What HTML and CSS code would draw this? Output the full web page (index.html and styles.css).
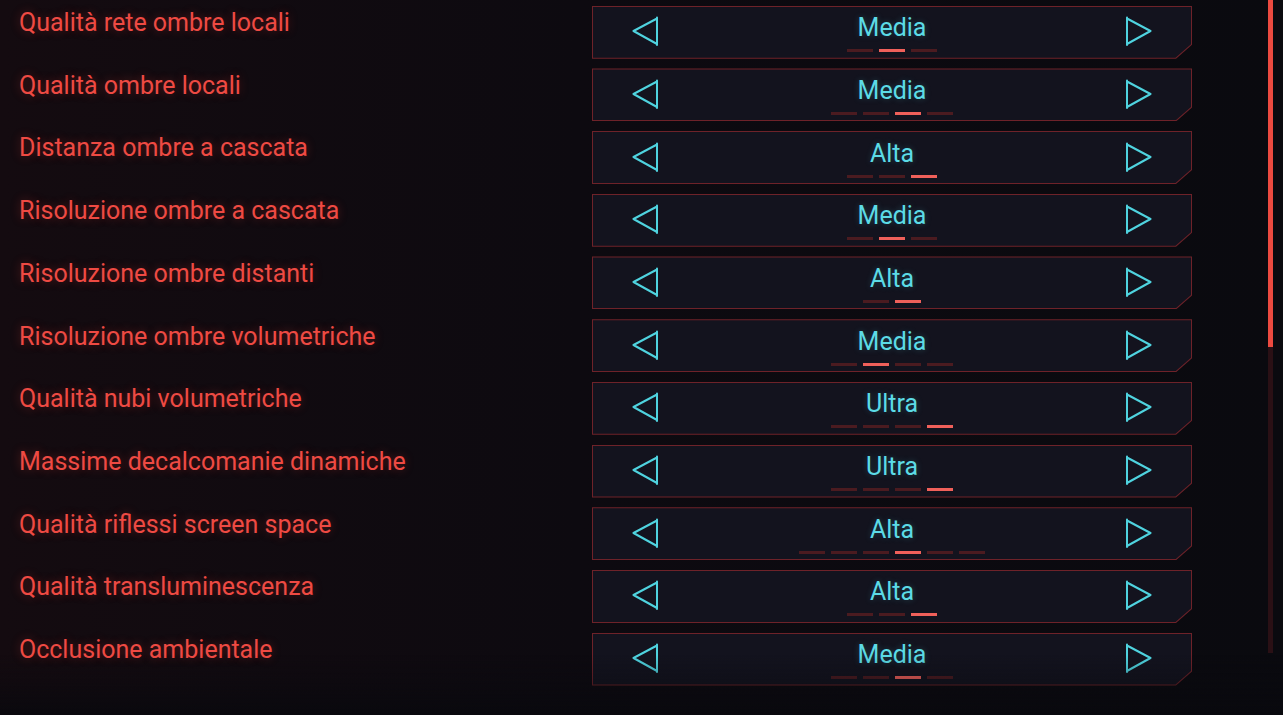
FILE: index.html
```html
<!DOCTYPE html>
<html lang="it">

<head>
    <meta charset="UTF-8">
    <meta name="viewport" content="width=device-width, initial-scale=1.0">
    <title>Impostazioni grafiche</title>
    <link rel="stylesheet" href="styles.css">
</head>

<body>
    <div class="page">
        <div class="list">
            <div class="row">
                <div class="label">Qualità rete ombre locali</div>
                <div class="field">
                    <div class="field-body">
                        <svg class="arrow" viewBox="0 0 26 30"><path d="M25 1.5 L25 29 M25 2.5 L1.5 15 L25 28" /></svg>
                        <div class="value">
                            <span class="value-text">Media</span>
                            <div class="steps"><i></i><i class="on"></i><i></i></div>
                        </div>
                        <svg class="arrow" viewBox="0 0 26 30"><path d="M1 1.5 L1 29 M1 2.5 L24.5 15 L1 28" /></svg>
                    </div>
                </div>
            </div>
            <div class="row">
                <div class="label">Qualità ombre locali</div>
                <div class="field">
                    <div class="field-body">
                        <svg class="arrow" viewBox="0 0 26 30"><path d="M25 1.5 L25 29 M25 2.5 L1.5 15 L25 28" /></svg>
                        <div class="value">
                            <span class="value-text">Media</span>
                            <div class="steps"><i></i><i></i><i class="on"></i><i></i></div>
                        </div>
                        <svg class="arrow" viewBox="0 0 26 30"><path d="M1 1.5 L1 29 M1 2.5 L24.5 15 L1 28" /></svg>
                    </div>
                </div>
            </div>
            <div class="row">
                <div class="label">Distanza ombre a cascata</div>
                <div class="field">
                    <div class="field-body">
                        <svg class="arrow" viewBox="0 0 26 30"><path d="M25 1.5 L25 29 M25 2.5 L1.5 15 L25 28" /></svg>
                        <div class="value">
                            <span class="value-text">Alta</span>
                            <div class="steps"><i></i><i></i><i class="on"></i></div>
                        </div>
                        <svg class="arrow" viewBox="0 0 26 30"><path d="M1 1.5 L1 29 M1 2.5 L24.5 15 L1 28" /></svg>
                    </div>
                </div>
            </div>
            <div class="row">
                <div class="label">Risoluzione ombre a cascata</div>
                <div class="field">
                    <div class="field-body">
                        <svg class="arrow" viewBox="0 0 26 30"><path d="M25 1.5 L25 29 M25 2.5 L1.5 15 L25 28" /></svg>
                        <div class="value">
                            <span class="value-text">Media</span>
                            <div class="steps"><i></i><i class="on"></i><i></i></div>
                        </div>
                        <svg class="arrow" viewBox="0 0 26 30"><path d="M1 1.5 L1 29 M1 2.5 L24.5 15 L1 28" /></svg>
                    </div>
                </div>
            </div>
            <div class="row">
                <div class="label">Risoluzione ombre distanti</div>
                <div class="field">
                    <div class="field-body">
                        <svg class="arrow" viewBox="0 0 26 30"><path d="M25 1.5 L25 29 M25 2.5 L1.5 15 L25 28" /></svg>
                        <div class="value">
                            <span class="value-text">Alta</span>
                            <div class="steps"><i></i><i class="on"></i></div>
                        </div>
                        <svg class="arrow" viewBox="0 0 26 30"><path d="M1 1.5 L1 29 M1 2.5 L24.5 15 L1 28" /></svg>
                    </div>
                </div>
            </div>
            <div class="row">
                <div class="label">Risoluzione ombre volumetriche</div>
                <div class="field">
                    <div class="field-body">
                        <svg class="arrow" viewBox="0 0 26 30"><path d="M25 1.5 L25 29 M25 2.5 L1.5 15 L25 28" /></svg>
                        <div class="value">
                            <span class="value-text">Media</span>
                            <div class="steps"><i></i><i class="on"></i><i></i><i></i></div>
                        </div>
                        <svg class="arrow" viewBox="0 0 26 30"><path d="M1 1.5 L1 29 M1 2.5 L24.5 15 L1 28" /></svg>
                    </div>
                </div>
            </div>
            <div class="row">
                <div class="label">Qualità nubi volumetriche</div>
                <div class="field">
                    <div class="field-body">
                        <svg class="arrow" viewBox="0 0 26 30"><path d="M25 1.5 L25 29 M25 2.5 L1.5 15 L25 28" /></svg>
                        <div class="value">
                            <span class="value-text">Ultra</span>
                            <div class="steps"><i></i><i></i><i></i><i class="on"></i></div>
                        </div>
                        <svg class="arrow" viewBox="0 0 26 30"><path d="M1 1.5 L1 29 M1 2.5 L24.5 15 L1 28" /></svg>
                    </div>
                </div>
            </div>
            <div class="row">
                <div class="label">Massime decalcomanie dinamiche</div>
                <div class="field">
                    <div class="field-body">
                        <svg class="arrow" viewBox="0 0 26 30"><path d="M25 1.5 L25 29 M25 2.5 L1.5 15 L25 28" /></svg>
                        <div class="value">
                            <span class="value-text">Ultra</span>
                            <div class="steps"><i></i><i></i><i></i><i class="on"></i></div>
                        </div>
                        <svg class="arrow" viewBox="0 0 26 30"><path d="M1 1.5 L1 29 M1 2.5 L24.5 15 L1 28" /></svg>
                    </div>
                </div>
            </div>
            <div class="row">
                <div class="label">Qualità riflessi screen space</div>
                <div class="field">
                    <div class="field-body">
                        <svg class="arrow" viewBox="0 0 26 30"><path d="M25 1.5 L25 29 M25 2.5 L1.5 15 L25 28" /></svg>
                        <div class="value">
                            <span class="value-text">Alta</span>
                            <div class="steps"><i></i><i></i><i></i><i class="on"></i><i></i><i></i></div>
                        </div>
                        <svg class="arrow" viewBox="0 0 26 30"><path d="M1 1.5 L1 29 M1 2.5 L24.5 15 L1 28" /></svg>
                    </div>
                </div>
            </div>
            <div class="row">
                <div class="label">Qualità transluminescenza</div>
                <div class="field">
                    <div class="field-body">
                        <svg class="arrow" viewBox="0 0 26 30"><path d="M25 1.5 L25 29 M25 2.5 L1.5 15 L25 28" /></svg>
                        <div class="value">
                            <span class="value-text">Alta</span>
                            <div class="steps"><i></i><i></i><i class="on"></i></div>
                        </div>
                        <svg class="arrow" viewBox="0 0 26 30"><path d="M1 1.5 L1 29 M1 2.5 L24.5 15 L1 28" /></svg>
                    </div>
                </div>
            </div>
            <div class="row">
                <div class="label">Occlusione ambientale</div>
                <div class="field">
                    <div class="field-body">
                        <svg class="arrow" viewBox="0 0 26 30"><path d="M25 1.5 L25 29 M25 2.5 L1.5 15 L25 28" /></svg>
                        <div class="value">
                            <span class="value-text">Media</span>
                            <div class="steps"><i></i><i></i><i class="on"></i><i></i></div>
                        </div>
                        <svg class="arrow" viewBox="0 0 26 30"><path d="M1 1.5 L1 29 M1 2.5 L24.5 15 L1 28" /></svg>
                    </div>
                </div>
            </div>
        </div>
        <div class="scroll">
            <div class="scroll-thumb"></div>
        </div>
    </div>
</body>

</html>
```
FILE: styles.css
```css
* {
    margin: 0;
    padding: 0;
    box-sizing: border-box;
}

html,
body {
    height: 100%;
}

body {
    font-family: Roboto, "Noto Sans", sans-serif;
    background: linear-gradient(90deg, #140b10 0%, #0d0a10 45%, #0a0a0f 100%);
    overflow: hidden;
}

/* dim the last row towards the bottom edge */
body::after {
    content: "";
    position: fixed;
    left: 0;
    right: 0;
    bottom: 0;
    height: 60px;
    background: linear-gradient(180deg, rgba(9, 9, 14, 0) 0%, rgba(9, 9, 14, 0.3) 45%, rgba(9, 9, 14, 0.85) 100%);
    pointer-events: none;
}

.page {
    display: flex;
}

.list {
    width: 1268px;
    padding-top: 5.7px;
    display: grid;
    grid-auto-rows: 53px;
    row-gap: 9.7px;
}

.row {
    display: grid;
    grid-template-columns: 592px 600px;
}

.label {
    padding: 4.4px 0 0 19px;
    font-size: 25px;
    line-height: 25px;
    color: #ee4a43;
    text-shadow: 0 0 10px rgba(230, 60, 50, 0.35);
    white-space: nowrap;
}

.field {
    background: #6e2229;
    clip-path: polygon(0 0, 100% 0, 100% calc(100% - 14px), calc(100% - 16px) 100%, 0 100%);
    padding: 1px;
}

.field-body {
    height: 100%;
    background: #13131e;
    clip-path: polygon(0 0, 100% 0, 100% calc(100% - 13.5px), calc(100% - 15.5px) 100%, 0 100%);
    display: flex;
    justify-content: space-between;
    align-items: flex-start;
    padding: 0 39px;
}

.arrow {
    width: 26px;
    height: 30px;
    margin-top: 9.5px;
    fill: none;
    stroke: #4fd3df;
    stroke-width: 2;
    stroke-linejoin: round;
    stroke-linecap: round;
}

.value {
    display: flex;
    flex-direction: column;
    align-items: center;
    padding-top: 8.5px;
}

.value-text {
    font-size: 25px;
    line-height: 25px;
    color: #5cdbe6;
    text-shadow: 0 0 6px rgba(80, 210, 225, 0.25);
}

.steps {
    display: flex;
    gap: 6px;
    margin-top: 9px;
}

.steps i {
    width: 26px;
    height: 3px;
    background: #4b1b20;
}

.steps i.on {
    background: #f0605a;
}

.scroll {
    width: 5px;
    height: 653px;
    background: #2a1015;
}

.scroll-thumb {
    height: 347px;
    background: #ec4a40;
}
```
